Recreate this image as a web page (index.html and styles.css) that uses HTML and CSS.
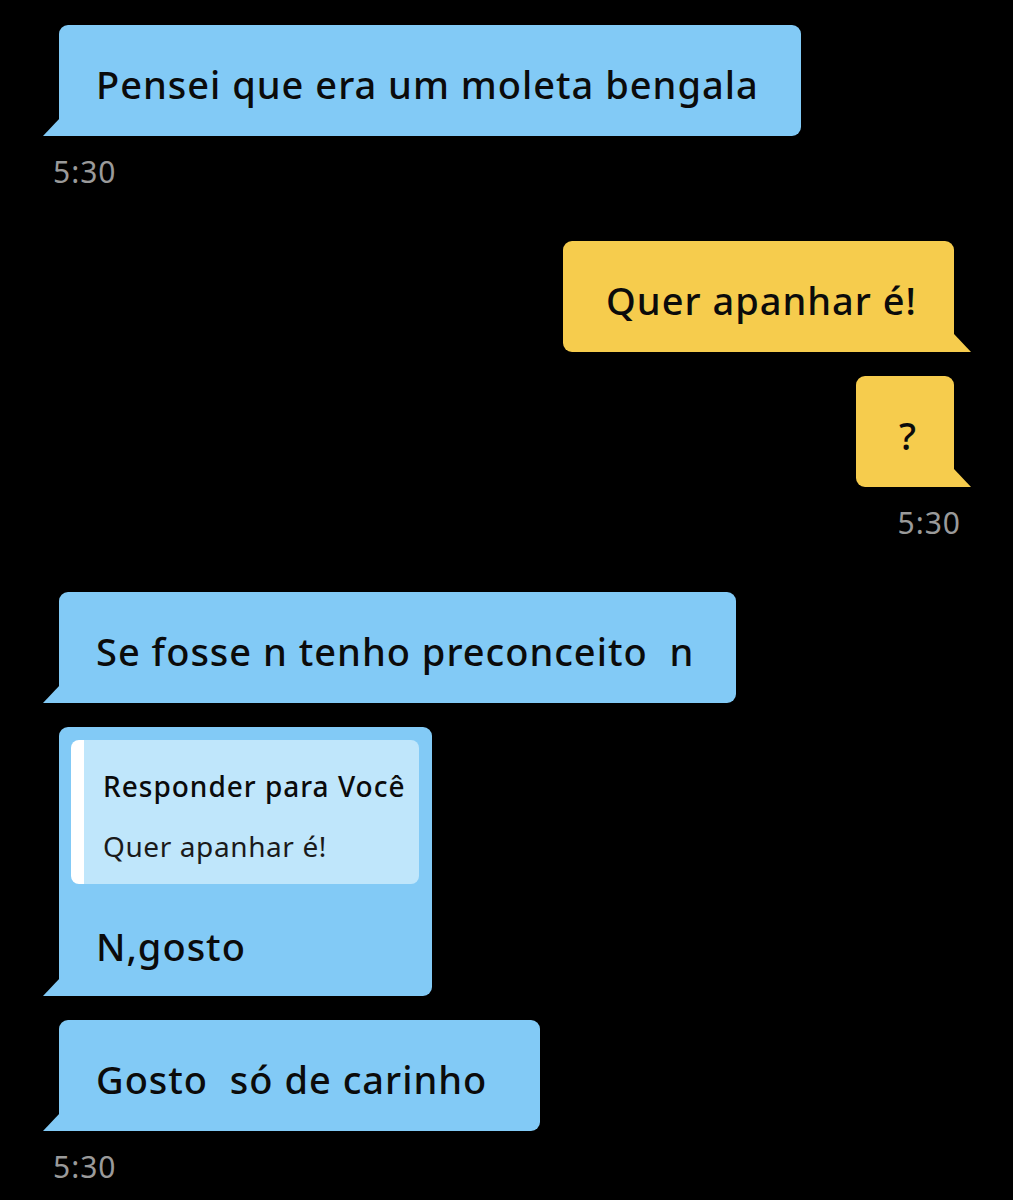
FILE: index.html
```html
<!DOCTYPE html>
<html lang="pt">
<head>
  <meta charset="UTF-8">
  <meta name="viewport" content="width=device-width, initial-scale=1.0">
  <title>Conversa</title>
  <link rel="stylesheet" href="styles.css">
</head>
<body>
<div class="chat">
  <div class="msg in">
    <div class="bubble">Pensei que era um moleta bengala</div>
  </div>
  <div class="time in">5:30</div>

  <div class="msg out first-out">
    <div class="bubble">Quer apanhar é!</div>
  </div>
  <div class="msg out">
    <div class="bubble">?</div>
  </div>
  <div class="time out">5:30</div>

  <div class="msg in first-in">
    <div class="bubble">Se fosse n tenho preconceito&nbsp; n</div>
  </div>
  <div class="msg in">
    <div class="bubble reply">
      <div class="quote">
        <div class="quote-name">Responder para Você</div>
        <div class="quote-text">Quer apanhar é!</div>
      </div>
      <div class="reply-text">N,gosto</div>
    </div>
  </div>
  <div class="msg in">
    <div class="bubble">Gosto&nbsp; só de carinho&nbsp;</div>
  </div>
  <div class="time in">5:30</div>
</div>
</body>
</html>
```

FILE: styles.css
```css
body {
  margin: 0;
  padding: 0;
  background: #000;
  font-family: "Noto Sans", "Open Sans", sans-serif;
  color: #0b0b0b;
}
.chat {
  display: flex;
  flex-direction: column;
  padding: 25px 59px 0 59px;
}
.msg {
  display: flex;
  margin-bottom: 24px;
}
.msg.in {
  justify-content: flex-start;
}
.msg.out {
  justify-content: flex-end;
}
.first-out,
.first-in {
  margin-top: 51px;
}
.bubble {
  position: relative;
  font-size: 38px;
  font-weight: 500;
  letter-spacing: 1px;
  line-height: 44px;
  padding: 37px 42px 30px 37px;
  border-radius: 9px;
  white-space: nowrap;
}
.msg.in .bubble {
  background: #82caf6;
  border-bottom-left-radius: 0;
}
.msg.out .bubble {
  background: #f6cc4d;
  border-bottom-right-radius: 0;
  padding: 37px 37px 30px 43px;
}
.bubble::after {
  content: "";
  position: absolute;
  bottom: 0;
  width: 17px;
  height: 18px;
}
.msg.in .bubble::after {
  left: -16px;
  background: #82caf6;
  clip-path: polygon(100% 0, 100% 100%, 0 100%);
}
.msg.out .bubble::after {
  right: -17px;
  background: #f6cc4d;
  clip-path: polygon(0 0, 100% 100%, 0 100%);
}
.msg + .time {
  margin-top: -6px;
}
.time {
  font-size: 30px;
  letter-spacing: 1px;
  line-height: 36px;
  color: #9a9a9a;
}
.time.in {
  align-self: flex-start;
  margin-left: -6px;
}
.time.out {
  align-self: flex-end;
  margin-right: -7px;
}
.bubble.reply {
  padding: 13px 13px 28px 12px;
}
.quote {
  background: #bfe6fb;
  border-left: 13px solid #fff;
  border-radius: 8px;
  padding: 26px 13px 18px 19px;
  font-size: 28px;
  line-height: 40px;
  letter-spacing: 0.6px;
}
.quote-name {
  font-weight: 500;
  letter-spacing: 1px;
  margin-bottom: 20px;
}
.quote-text {
  font-weight: 400;
  color: #1a1a1a;
}
.reply-text {
  padding: 40px 0 0 25px;
}
```
